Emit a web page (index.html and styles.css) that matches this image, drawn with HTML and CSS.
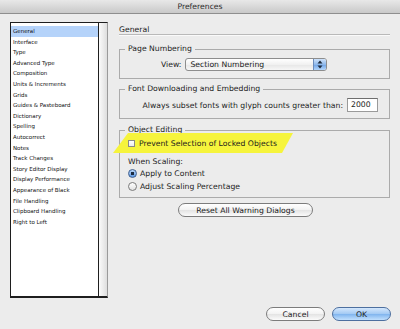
FILE: index.html
```html
<!DOCTYPE html>
<html lang="en">
<head>
    <meta charset="UTF-8">
    <meta name="viewport" content="width=device-width, initial-scale=1.0">
    <title>Preferences</title>
    <link rel="stylesheet" href="styles.css">
</head>
<body>
<div class="titlebar">Preferences</div>

<div class="content">
    <div class="sidebar">
        <ul class="cat-list">
            <li class="selected">General</li>
            <li>Interface</li>
            <li>Type</li>
            <li>Advanced Type</li>
            <li>Composition</li>
            <li>Units &amp; Increments</li>
            <li>Grids</li>
            <li>Guides &amp; Pasteboard</li>
            <li>Dictionary</li>
            <li>Spelling</li>
            <li>Autocorrect</li>
            <li>Notes</li>
            <li>Track Changes</li>
            <li>Story Editor Display</li>
            <li>Display Performance</li>
            <li>Appearance of Black</li>
            <li>File Handling</li>
            <li>Clipboard Handling</li>
            <li>Right to Left</li>
        </ul>
        <div class="scrollbar"></div>
    </div>

    <div class="panel">
        <h2 class="panel-title">General</h2>

        <fieldset class="group group-page">
            <legend>Page Numbering</legend>
            <div class="view-row">
                <span>View:</span>
                <div class="select">
                    <span class="select-value">Section Numbering</span>
                    <span class="select-arrows">
                        <svg width="8" height="11" viewBox="0 0 8 11">
                            <path d="M4 1.5 L6.5 4.5 L1.5 4.5 Z" fill="#1d2b3c"/>
                            <path d="M4 9.5 L6.5 6.5 L1.5 6.5 Z" fill="#1d2b3c"/>
                        </svg>
                    </span>
                </div>
            </div>
        </fieldset>

        <fieldset class="group group-font">
            <legend>Font Downloading and Embedding</legend>
            <div class="subset-row">
                <span>Always subset fonts with glyph counts greater than:</span>
                <div class="text-field">2000</div>
            </div>
        </fieldset>

        <fieldset class="group group-edit">
            <legend>Object Editing</legend>
            <div class="check-row">
                <span class="checkbox"></span>
                <span class="check-label">Prevent Selection of Locked Objects</span>
            </div>
            <div class="scaling-label">When Scaling:</div>
            <div class="radio-row">
                <span class="radio checked"></span>
                <span>Apply to Content</span>
            </div>
            <div class="radio-row">
                <span class="radio"></span>
                <span>Adjust Scaling Percentage</span>
            </div>
        </fieldset>

        <button class="btn btn-reset">Reset All Warning Dialogs</button>
    </div>
</div>

<div class="footer">
    <button class="btn">Cancel</button>
    <button class="btn btn-default">OK</button>
</div>
</body>
</html>
```

FILE: styles.css
```css
body {
    margin: 0;
    width: 400px;
    height: 329px;
    overflow: hidden;
    background: #ececec;
    font-family: "DejaVu Sans", sans-serif;
    font-size: 7.7px;
    color: #1c1c1c;
}
.titlebar {
    height: 13px;
    line-height: 13px;
    text-align: center;
    color: #2a2a2a;
    background: linear-gradient(#e8e8e8, #c9c9c9);
    border-bottom: 1px solid #8e8e8e;
}
.content {
    display: flex;
    padding: 8px 0 0 10px;
}

/* category list */
.sidebar {
    display: flex;
    width: 98px;
    height: 276px;
    box-sizing: border-box;
    border: 1px solid #1e1e1e;
    border-right-color: #9a9a9a;
    border-bottom-width: 2px;
}
.cat-list {
    flex: 1;
    list-style: none;
    margin: 0;
    padding: 3px 0 0;
    background: #fff;
    border-right: 1px solid #1e1e1e;
    font-size: 5.5px;
    color: #111;
}
.cat-list li {
    height: 10.6px;
    line-height: 10.6px;
    padding-left: 2px;
    white-space: nowrap;
}
.cat-list li.selected {
    background: #b5d3fa;
}
.scrollbar {
    width: 8px;
    background: linear-gradient(to right, #fbfbfb, #dedede);
}

/* right panel */
.panel {
    width: 271px;
    margin-left: 11px;
}
.panel-title {
    margin: 3px 0 0;
    font-size: 7.7px;
    font-weight: normal;
    line-height: 9px;
    border-bottom: 1px solid #b9b9b9;
    box-shadow: 0 1px 0 #fafafa;
}
.group {
    margin: 0;
    padding: 5px 8px 7px;
    border: 1px solid #ababab;
    min-width: 0;
}
.group legend {
    padding: 0 3px;
    margin-left: -3px;
    line-height: 8px;
}
.group-page {
    margin-top: 10px;
}
.group-font {
    margin-top: 6px;
    padding: 5px 11px 6px 8px;
}
.group-edit {
    margin-top: 7px;
    padding-bottom: 5px;
}

.view-row {
    display: flex;
    align-items: center;
    padding-left: 33px;
}
.select {
    display: flex;
    width: 142px;
    height: 13px;
    margin-left: 4px;
    box-sizing: border-box;
    border: 1px solid #8d8d8d;
    border-radius: 3px;
    background: linear-gradient(#ffffff, #f1f1f1 50%, #e6e6e6 51%, #f7f7f7);
    overflow: hidden;
}
.select-value {
    flex: 1;
    line-height: 11px;
    padding-left: 4px;
}
.select-arrows {
    width: 12px;
    display: flex;
    align-items: center;
    justify-content: center;
    border-left: 1px solid #6c8cbb;
    background: linear-gradient(#cfe3fb, #8fb9ec 50%, #6ea3e6 51%, #b4d6fb);
}

.subset-row {
    display: flex;
    align-items: center;
    justify-content: flex-end;
}
.text-field {
    width: 31px;
    height: 14px;
    margin-left: 4px;
    box-sizing: border-box;
    padding-left: 3px;
    line-height: 12px;
    background: #fff;
    border: 1px solid #9a9a9a;
    border-top-color: #6e6e6e;
}

.check-row {
    position: relative;
    display: flex;
    align-items: center;
    height: 9px;
}
.check-row::before {
    content: "";
    position: absolute;
    left: -15px;
    top: -6px;
    width: 180px;
    height: 20px;
    background: #f6f43c;
    clip-path: polygon(15px 0, 180px 0, 169px 20px, 0 20px);
}
.checkbox {
    position: relative;
    width: 7px;
    height: 7px;
    margin-right: 4px;
    box-sizing: border-box;
    border: 1px solid #8a8a8a;
    background: linear-gradient(#ffffff, #ececec);
}
.check-label {
    position: relative;
}
.scaling-label {
    margin-top: 9px;
    line-height: 9px;
}
.radio-row {
    display: flex;
    align-items: center;
    height: 11px;
    margin-top: 2px;
}
.radio {
    width: 9px;
    height: 9px;
    margin-right: 3px;
    box-sizing: border-box;
    border: 1px solid #7b7b7b;
    border-radius: 50%;
    background: linear-gradient(#ffffff, #e2e2e2);
}
.radio.checked {
    border-color: #3f5f8f;
    background: radial-gradient(circle, #1b2a40 0, #1b2a40 1.6px, transparent 1.9px),
                linear-gradient(#b9d6f8, #5e98e2);
}

/* buttons */
.btn {
    display: block;
    height: 14px;
    padding: 0;
    box-sizing: border-box;
    font-family: "DejaVu Sans", sans-serif;
    font-size: 7.7px;
    color: #1c1c1c;
    border: 1px solid #7c7c7c;
    border-radius: 7px;
    background: linear-gradient(#ffffff, #f2f2f2 50%, #e3e3e3 51%, #fbfbfb);
}
.btn-reset {
    width: 135px;
    margin: 5px 0 0 59px;
}
.footer {
    display: flex;
    justify-content: flex-end;
    gap: 7px;
    padding: 9px 9px 0 0;
}
.footer .btn {
    width: 59px;
}
.btn-default {
    border-color: #4d6f9f;
    background: linear-gradient(#d4e7fc, #a2c9f3 50%, #7fb4ee 51%, #c2e0fd);
}
```
